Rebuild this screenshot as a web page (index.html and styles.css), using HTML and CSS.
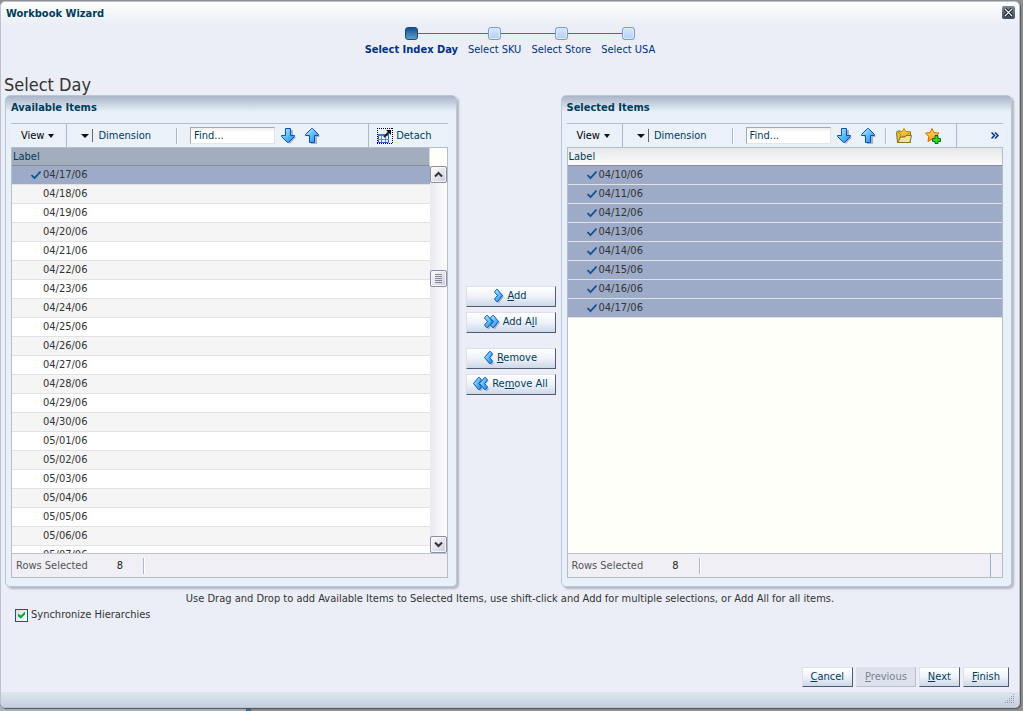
FILE: index.html
```html
<!DOCTYPE html>
<html lang="en">
<head>
    <meta charset="UTF-8">
    <meta name="viewport" content="width=device-width, initial-scale=1.0">
    <title>Workbook Wizard</title>
    <link rel="stylesheet" href="styles.css">
</head>
<body>
    <!-- shared icons -->
    <svg class="sprite" aria-hidden="true">
        <defs>
            <linearGradient id="blue" x1="0" y1="0" x2="1" y2="1">
                <stop offset="0" stop-color="#c9efff"/>
                <stop offset="0.5" stop-color="#5cbcfb"/>
                <stop offset="1" stop-color="#1a86ee"/>
            </linearGradient>
            <linearGradient id="gold" x1="0" y1="0" x2="0" y2="1">
                <stop offset="0" stop-color="#ffe36a"/>
                <stop offset="1" stop-color="#ff9a0c"/>
            </linearGradient>
        </defs>
        <symbol id="arrow-down" viewBox="0 0 16 16">
            <path d="M6 2h6v7h3L9 16 3 9h3z" fill="#8d97ad" opacity="0.7"/>
            <path d="M4.500 0.500h5v7h4v1L7.500 14.500h-1L0.500 8.500v-1h4z" fill="url(#blue)" stroke="#0b50b8"/>
        </symbol>
        <symbol id="arrow-up" viewBox="0 0 16 16">
            <path d="M6 16h6V9h3L8 2 3 9h3z" fill="#8d97ad" opacity="0.7"/>
            <path d="M4.500 14.500h5v-7h4v-1L7.500 0.500h-1L0.500 6.500v1h4z" fill="url(#blue)" stroke="#0b50b8"/>
        </symbol>
        <symbol id="check" viewBox="0 0 12 10">
            <path d="M1.500 6L4.500 9 10.500 2.500" fill="none" stroke="#7ba0cc" stroke-width="1.500"/>
            <path d="M1.500 5L4.500 8 10.500 1.500" fill="none" stroke="#124b8d" stroke-width="1.700"/>
        </symbol>
        <symbol id="chevron" viewBox="0 0 10 14">
            <path d="M2 4l2-2 6 5.500L5 14H4l-2-2 3.500-4.500z" fill="#7f8ba6" opacity="0.6"/>
            <path d="M0.500 3L2.500 0.500h1L8.500 6.500 3.500 12.500h-1L0.500 10 3.500 6.500z" fill="url(#blue)" stroke="#0b55b5"/>
        </symbol>
        <symbol id="chevron-left" viewBox="0 0 10 14">
            <path d="M9.500 4l-2-2-6 5.500L7 14h1l2-2-3.500-4.500z" fill="#7f8ba6" opacity="0.6"/>
            <path d="M8.500 3L6.500 0.500h-1L0.500 6.500 5.500 12.500h1L8.500 10 5.500 6.500z" fill="url(#blue)" stroke="#0b55b5"/>
        </symbol>
    </svg>

    <div class="dialog">
        <header class="title-bar">
            <h1>Workbook Wizard</h1>
            <button class="close" aria-label="Close">
                <svg width="13" height="13" viewBox="0 0 13 13"><path d="M3 3l7 7M10 3l-7 7" stroke="#000" stroke-width="3"/><path d="M3 3l7 7M10 3l-7 7" stroke="#fff" stroke-width="1.300"/></svg>
            </button>
        </header>

        <ol class="train">
            <li class="current"><span class="stop"></span><a href="#">Select Index Day</a></li>
            <li><span class="stop"></span><a href="#">Select SKU</a></li>
            <li><span class="stop"></span><a href="#">Select Store</a></li>
            <li><span class="stop"></span><a href="#">Select USA</a></li>
        </ol>

        <h2>Select Day</h2>

        <main class="shuttle">
            <section class="panel">
                <h3>Available Items</h3>
                <div class="toolbar">
                    <button class="tool view">View <span class="caret"></span></button>
                    <span class="divider"></span>
                    <button class="tool level" aria-label="Level"><span class="caret big"></span></button>
                    <button class="tool dimension">Dimension</button>
                    <span class="separator"></span>
                    <input class="find" type="text" value="Find..." aria-label="Find available items">
                    <button class="tool icon" aria-label="Find next"><svg width="16" height="16"><use href="#arrow-down"/></svg></button>
                    <button class="tool icon" aria-label="Find previous"><svg width="16" height="16"><use href="#arrow-up"/></svg></button>
                    <span class="divider push"></span>
                    <button class="tool detach">
                        <svg width="16" height="16" viewBox="0 0 16 16">
                            <path d="M1.500 6.500h10v8h-10z" fill="#e8f3ff" stroke="#2a60c8"/>
                            <path d="M1 6h11v2H1z" fill="#3b78dc"/>
                            <path d="M4.500 8v6M8.500 8v6M1 11.500h11" stroke="#5a8fe0"/>
                            <path d="M7 9l5-5" stroke="#222" stroke-width="2"/>
                            <path d="M9 2h5v5z" fill="#111"/>
                            <path d="M0 0.500h16M0 15.500h16M0.500 0v16M15.500 0v16" stroke="#000" stroke-dasharray="1 1"/>
                        </svg>
                        Detach
                    </button>
                </div>
                <div class="grid">
                    <div class="rows">
                        <table class="available">
                            <thead><tr><th>Label</th></tr></thead>
                            <tbody>
                                <tr class="selected"><td><svg class="check"><use href="#check"/></svg>04/17/06</td></tr>
                                <tr><td>04/18/06</td></tr>
                                <tr><td>04/19/06</td></tr>
                                <tr><td>04/20/06</td></tr>
                                <tr><td>04/21/06</td></tr>
                                <tr><td>04/22/06</td></tr>
                                <tr><td>04/23/06</td></tr>
                                <tr><td>04/24/06</td></tr>
                                <tr><td>04/25/06</td></tr>
                                <tr><td>04/26/06</td></tr>
                                <tr><td>04/27/06</td></tr>
                                <tr><td>04/28/06</td></tr>
                                <tr><td>04/29/06</td></tr>
                                <tr><td>04/30/06</td></tr>
                                <tr><td>05/01/06</td></tr>
                                <tr><td>05/02/06</td></tr>
                                <tr><td>05/03/06</td></tr>
                                <tr><td>05/04/06</td></tr>
                                <tr><td>05/05/06</td></tr>
                                <tr><td>05/06/06</td></tr>
                                <tr><td>05/07/06</td></tr>
                            </tbody>
                        </table>
                    </div>
                    <div class="scrollbar">
                        <button aria-label="Scroll up"><svg width="9" height="7" viewBox="0 0 9 7"><path d="M1 5.500L4.500 2 8 5.500" fill="none" stroke="#333" stroke-width="2"/></svg></button>
                        <span></span>
                        <div class="thumb"></div>
                        <span></span>
                        <button aria-label="Scroll down"><svg width="9" height="7" viewBox="0 0 9 7"><path d="M1 1.500L4.500 5 8 1.500" fill="none" stroke="#333" stroke-width="2"/></svg></button>
                    </div>
                </div>
                <div class="status"><span>Rows Selected</span><output>8</output><i class="separator"></i></div>
            </section>

            <div class="actions">
                <button class="btn"><svg width="10" height="14"><use href="#chevron"/></svg><span><u>A</u>dd</span></button>
                <button class="btn"><svg width="16" height="14"><use href="#chevron" width="10"/><use href="#chevron" x="6" width="10"/></svg><span>Add A<u>l</u>l</span></button>
                <button class="btn second"><svg width="10" height="14"><use href="#chevron-left"/></svg><span><u>R</u>emove</span></button>
                <button class="btn"><svg width="16" height="14"><use href="#chevron-left" x="6" width="10"/><use href="#chevron-left" width="10"/></svg><span>Re<u>m</u>ove All</span></button>
            </div>

            <section class="panel">
                <h3>Selected Items</h3>
                <div class="toolbar">
                    <button class="tool view">View <span class="caret"></span></button>
                    <span class="divider"></span>
                    <button class="tool level" aria-label="Level"><span class="caret big"></span></button>
                    <button class="tool dimension">Dimension</button>
                    <span class="separator"></span>
                    <input class="find" type="text" value="Find..." aria-label="Find selected items">
                    <button class="tool icon" aria-label="Find next"><svg width="16" height="16"><use href="#arrow-down"/></svg></button>
                    <button class="tool icon" aria-label="Find previous"><svg width="16" height="16"><use href="#arrow-up"/></svg></button>
                    <span class="separator near"></span>
                    <button class="tool icon folder" aria-label="Open favorites">
                        <svg width="16" height="16" viewBox="0 0 16 16">
                            <path d="M0.500 4.500l1-1.500h3l1 1.500h9v10H1.500z" fill="#d9c25a" stroke="#8c6d14"/>
                            <path d="M8 0.500l1.700 3 4.800 0.300-3 2.700 0.900 3.500L8 8.500 4 10l0.500-3.500-2.800-2.700 4.500-0.300z" fill="url(#gold)" stroke="#e87400"/>
                            <path d="M2 14.500L4.500 9H9l1-1.500h5.500l-1.500 7z" fill="#ece29a" stroke="#8c7420"/>
                        </svg>
                    </button>
                    <button class="tool icon favorite" aria-label="Add favorite">
                        <svg width="16" height="16" viewBox="0 0 16 16">
                            <path d="M7 0.500l2 4.200 5 0.300-3.500 3.500 0.800 5L7 11l-4 2.500 0.700-5L0.500 5l4.700-0.300z" fill="url(#gold)" stroke="#d96a00"/>
                            <path d="M10 7.500h3v3h2.500v3H13v2h-3v-2H7.500v-3H10z" fill="#31d531" stroke="#087108"/>
                        </svg>
                    </button>
                    <span class="divider after-icons"></span>
                    <button class="tool more push" aria-label="More">
                        <svg width="8" height="7" viewBox="0 0 8 7"><path d="M0.500 0.500l3 3-3 3M4 0.500l3 3-3 3" fill="none" stroke="#003286" stroke-width="1.500"/></svg>
                    </button>
                </div>
                <div class="grid">
                    <div class="rows">
                        <table>
                            <thead><tr><th>Label</th></tr></thead>
                            <tbody>
                                <tr class="selected"><td><svg class="check"><use href="#check"/></svg>04/10/06</td></tr>
                                <tr class="selected"><td><svg class="check"><use href="#check"/></svg>04/11/06</td></tr>
                                <tr class="selected"><td><svg class="check"><use href="#check"/></svg>04/12/06</td></tr>
                                <tr class="selected"><td><svg class="check"><use href="#check"/></svg>04/13/06</td></tr>
                                <tr class="selected"><td><svg class="check"><use href="#check"/></svg>04/14/06</td></tr>
                                <tr class="selected"><td><svg class="check"><use href="#check"/></svg>04/15/06</td></tr>
                                <tr class="selected"><td><svg class="check"><use href="#check"/></svg>04/16/06</td></tr>
                                <tr class="selected"><td><svg class="check"><use href="#check"/></svg>04/17/06</td></tr>
                            </tbody>
                        </table>
                    </div>
                </div>
                <div class="status"><span>Rows Selected</span><output>8</output><i class="separator"></i><i class="end"></i></div>
            </section>
        </main>

        <p class="hint">Use Drag and Drop to add Available Items to Selected Items, use shift-click and Add for multiple selections, or Add All for all items.</p>
        <label class="sync"><input type="checkbox" checked>Synchronize Hierarchies</label>

        <div class="buttons">
            <button class="btn"><span><u>C</u>ancel</span></button>
            <button class="btn" disabled><span><u>P</u>revious</span></button>
            <button class="btn"><span><u>N</u>ext</span></button>
            <button class="btn"><span><u>F</u>inish</span></button>
        </div>
        <footer class="resize">
            <svg width="10" height="10" viewBox="0 0 10 10"><path d="M9 0.500h1M7 2.500h3M5 4.500h5M3 6.500h7M1 8.500h9" stroke="#8f98a8" stroke-dasharray="1 1"/></svg>
        </footer>
    </div>
</body>
</html>
```

FILE: styles.css
```css
* {
    box-sizing: border-box;
}
html {
    background: #8e9090;
}
body {
    margin: 0;
    height: 100vh;
    padding: 1px 3px 3px 0;
    background: linear-gradient(to right, #a9b4bc 246px, #3f6a8e 246px, #3f6a8e 251px, #8e9090 251px) bottom / 100% 5px no-repeat;
    font-family: "DejaVu Sans Condensed", Tahoma, "DejaVu Sans", sans-serif;
    font-size: 11px;
    line-height: 14px;
    color: #333;
}
button, input {
    font: inherit;
    color: inherit;
}
button {
    padding: 0;
    border: none;
    background: none;
    cursor: pointer;
}
.sprite {
    position: absolute;
    width: 0;
    height: 0;
}
.dialog {
    display: flex;
    flex-direction: column;
    height: 100%;
    border: 1px solid #bcc1d2;
    border-radius: 5px;
    background: linear-gradient(#fff, #ebeef6 22px);
    box-shadow: 1px 1px 1px #555;
    overflow: hidden;
}

/* header */
.title-bar {
    display: flex;
    justify-content: space-between;
    padding: 4px 4px 0 5px;
    height: 25px;
}
h1, h3 {
    margin: 0;
    font-size: 11px;
    font-weight: bold;
    color: #003d5b;
}
h1 {
    line-height: 16px;
}
.close {
    width: 13px;
    height: 13px;
    border-radius: 2px;
    background: linear-gradient(#7b899e, #3d4b61);
}
.close svg {
    display: block;
}
.train {
    display: flex;
    justify-content: center;
    margin: 0;
    padding: 0;
    list-style: none;
}
.train li {
    display: grid;
    grid-template-columns: 1fr 13px 1fr;
    align-items: center;
    row-gap: 3px;
}
.train li::before, .train li::after {
    content: "";
    height: 1px;
    background: #3f6ad0;
}
.train li::before {
    grid-area: 1 / 1;
}
.train li::after {
    grid-area: 1 / 3;
}
.train li:first-child::before, .train li:last-child::after {
    visibility: hidden;
}
.stop {
    grid-area: 1 / 2;
    height: 13px;
    border: 1px solid #6f98f5;
    border-radius: 3px;
    background: linear-gradient(#d9e6ff, #b2cfff);
    box-shadow: inset 0 0 0 1px #e3edff;
}
.current .stop {
    border-color: #134a82;
    background: linear-gradient(#12508f, #5e9fcb);
    box-shadow: none;
}
.train a {
    grid-area: 2 / 1 / 3 / 4;
    padding: 0 5px;
    color: #003286;
    text-decoration: none;
}
.train .current a {
    font-weight: bold;
}
h2 {
    margin: 18px 0 0 3px;
    font-size: 18px;
    font-weight: normal;
    line-height: 20px;
}

/* shuttle */
.shuttle {
    flex: 1;
    display: grid;
    grid-template-columns: minmax(0, 1fr) 94px minmax(0, 1fr);
    grid-template-rows: minmax(0, 1fr);
    column-gap: 5px;
    min-height: 0;
    padding: 0 7px 0 4px;
}
.panel {
    display: flex;
    flex-direction: column;
    min-height: 0;
    padding: 0 8px 8px 5px;
    border: 1px solid #bcc6d8;
    border-radius: 5px;
    background: linear-gradient(#abb5c9, #e8f0f9 16px);
    box-shadow: 2px 2px 2px #b3b7c2;
}
h3 {
    padding: 4px 0 8px;
    line-height: 15px;
}
.toolbar {
    display: flex;
    align-items: center;
    height: 24px;
    border-top: 1px solid #b4bfd5;
    background: #eaf1f9;
    color: #003d5b;
}
.tool {
    display: flex;
    align-items: center;
}
.view {
    padding: 0 12px 0 10px;
    gap: 4px;
    color: #000;
}
.caret {
    border: 3px solid transparent;
    border-top: 4px solid #111;
    border-bottom: 0;
}
.caret.big {
    border-width: 4px 4px 0;
}
.divider {
    align-self: stretch;
    width: 1px;
    background: #aab7d0;
}
.level {
    height: 13px;
    margin-left: 14px;
    padding-right: 3px;
    border-right: 1px solid #666;
}
.dimension {
    padding-left: 5px;
}
.separator {
    width: 2px;
    height: 16px;
    margin: 0 12px 0 25px;
    border-left: 1px solid #aab7d0;
    border-right: 1px solid #fff;
}
.separator.near {
    margin: 0 9px 0 0;
}
.find {
    width: 85px;
    height: 17px;
    margin-right: 6px;
    padding: 0 3px;
    border: 1px solid #e2e5e8;
    border-top: 1px solid #a3a8ad;
    border-left: 1px solid #a3a8ad;
    background: linear-gradient(#eee, #fff 4px);
}
.icon {
    width: 16px;
    margin-right: 8px;
}
.folder {
    margin-right: 13px;
}
.favorite {
    margin-right: 0;
}
.push {
    margin-left: auto;
}
.after-icons {
    margin-left: 15px;
}
.detach {
    gap: 3px;
    padding: 0 16px 0 8px;
}
.more {
    padding-right: 4px;
}

/* grids */
.grid {
    flex: 1;
    display: flex;
    min-height: 0;
    border: 1px solid #b8bcc6;
    border-bottom-color: #bcc1d5;
    background: #fffffa;
}
.rows {
    flex: 1;
    overflow: hidden;
}
table {
    width: 100%;
    border-spacing: 0;
}
th {
    height: 18px;
    padding: 0 1px;
    border-bottom: 1px solid #8a8d94;
    background: linear-gradient(#e8e8eb, #fbfbfc);
    font-weight: normal;
    text-align: left;
    color: #003d5b;
}
.available th {
    border-right: 1px solid #d5d8dd;
    background: #a2adbe;
}
td {
    height: 19px;
    padding: 0 0 1px 31px;
    border-bottom: 1px solid #e2e2e2;
    background: #fff;
}
.available tr:nth-child(even) td {
    background: #f5f5f5;
}
.selected td {
    padding-left: 18px;
    background: #9dabc9;
}
.check {
    width: 12px;
    height: 10px;
    margin-right: 1px;
    vertical-align: -2px;
}
.scrollbar {
    display: grid;
    grid-template-rows: 17px 35fr 17px 100fr 17px;
    width: 17px;
    margin-top: 18px;
    background: linear-gradient(to right, #e9e9f1, #fdfdff);
}
.scrollbar button, .thumb {
    border: 1px solid #8b8ea2;
    border-radius: 2px;
    background: linear-gradient(135deg, #fff, #c9cada);
    box-shadow: inset 0 0 0 1px #f6f6fb;
}
.scrollbar svg {
    display: block;
    margin: auto;
}
.thumb {
    padding: 3px 4px;
}
.thumb::before {
    content: "";
    display: block;
    height: 9px;
    background: repeating-linear-gradient(#85889a 0 1px, transparent 1px 2px);
}
.status {
    display: flex;
    align-items: center;
    height: 24px;
    padding-left: 4px;
    border: 1px solid #b8bcc0;
    border-top: 0;
    background: #efeff5;
    color: #555;
}
.status output {
    margin-left: 29px;
    color: #222;
}
.status .separator {
    margin: 0 0 0 20px;
}
.status .end {
    align-self: stretch;
    width: 12px;
    margin-left: auto;
    border-left: 1px solid #a0b1d0;
}

/* buttons */
.btn {
    display: flex;
    align-items: center;
    justify-content: center;
    gap: 5px;
    height: 20px;
    padding: 0 8px;
    border: 1px solid #dde1e8;
    border-right-color: #4f5b70;
    border-bottom-color: #4f5b70;
    background: linear-gradient(#fff, #eef2f9 50%, #cdd8e9);
    color: #003d5b;
    white-space: nowrap;
}
.btn:disabled {
    border-color: #dfe3ea #b7c0cf #b7c0cf #dfe3ea;
    background: #dce1ec;
    color: #7b8394;
}
.actions {
    align-self: center;
    display: flex;
    flex-direction: column;
    gap: 5px;
    padding: 0 0 2px 4px;
}
.actions .btn {
    gap: 3px;
    height: 21px;
    padding: 0;
}
.second {
    margin-top: 10px;
}

/* bottom */
.hint {
    margin: 5px 0 0;
    text-align: center;
}
.sync {
    display: flex;
    align-items: center;
    align-self: flex-start;
    gap: 3px;
    margin: 2px 0 0 14px;
}
.sync input {
    appearance: none;
    width: 13px;
    height: 13px;
    margin: 0;
    border: 1px solid #1c5180;
    background: linear-gradient(135deg, #dcdcd7, #fff);
}
.sync input:checked::before {
    content: "";
    display: block;
    width: 7px;
    height: 7px;
    margin: 2px;
    background: #21a121;
    clip-path: polygon(0 28%, 42% 57%, 100% 0, 100% 43%, 42% 100%, 0 71%);
}
.buttons {
    display: flex;
    justify-content: flex-end;
    gap: 3px;
    margin-top: 45px;
    padding: 0 10px 5px;
}
.resize {
    display: flex;
    align-items: flex-end;
    justify-content: flex-end;
    height: 15px;
    padding: 0 5px 3px;
    background: linear-gradient(#e0e6ef, #c5cfdf);
}
```
